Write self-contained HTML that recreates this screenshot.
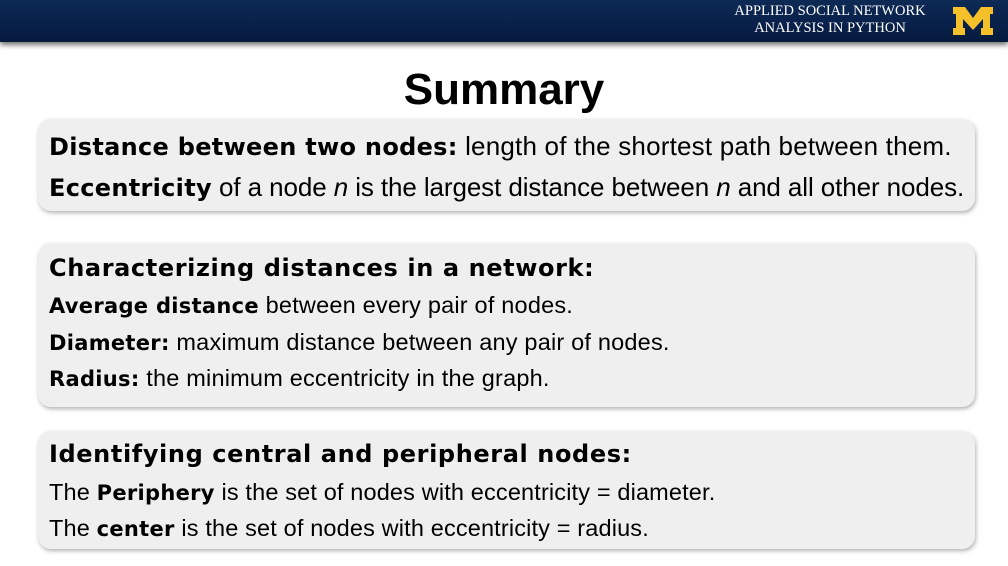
<!DOCTYPE html>
<html><head><meta charset="utf-8">
<style>
body{margin:0;width:1008px;height:566px;background:#fff;position:relative;overflow:hidden;font-family:"Liberation Sans",sans-serif;color:#000}
.hdr{position:absolute;left:0;top:0;width:1008px;height:42px;background:linear-gradient(#0d2a55,#08204a 60%,#061a3c);box-shadow:0 3px 5px rgba(0,0,0,.55)}
.ht{position:absolute;left:720px;top:3px;width:220px;text-align:center;color:#fff;font-family:"Liberation Serif",serif;font-size:14.5px;line-height:17px}
.m{position:absolute;left:952px;top:6px;width:42px;height:30px}
.title{position:absolute;left:0;width:1008px;top:62px;text-align:center;font-size:44px;font-weight:bold;line-height:56px}
.box{position:absolute;left:38px;width:937px;background:#efefef;border-radius:13px;box-shadow:1px 2px 4px rgba(0,0,0,.3)}
.l{position:absolute;left:49px;white-space:nowrap;line-height:30px}
.a{font-size:26px}
.h{font-size:24px;font-weight:bold;font-family:"DejaVu Sans",sans-serif;letter-spacing:0.6px}
.s{font-size:23.5px;letter-spacing:0.2px}
b{font-weight:bold;font-family:"DejaVu Sans",sans-serif;letter-spacing:0.3px}
.a b{font-size:24px}
.s b{font-size:21px}
</style></head><body>
<div class="hdr">
<div class="ht">APPLIED SOCIAL NETWORK<br>ANALYSIS IN PYTHON</div>
<svg class="m" viewBox="0 0 42 30"><path d="M1 1h12l8 11 8-11h12v7h-3v14h3v7H29v-7h2V13l-10 11-10-11v9h2v7H1v-7h3V8H1z" fill="#f6c02a"/></svg>
</div>
<div class="title">Summary</div>
<div class="box" style="top:119px;height:92px"></div>
<div class="box" style="top:243px;height:164px"></div>
<div class="box" style="top:431px;height:118px"></div>
<div class="l a" style="top:131px;letter-spacing:0.2px"><b>Distance between two nodes:</b> length of the shortest path between them.</div>
<div class="l a" style="top:172px;letter-spacing:-0.1px"><b>Eccentricity</b> of a node <i>n</i> is the largest distance between <i>n</i> and all other nodes.</div>
<div class="l h" style="top:253px">Characterizing distances in a network:</div>
<div class="l s" style="top:290px"><b>Average distance</b> between every pair of nodes.</div>
<div class="l s" style="top:327px"><b>Diameter:</b> maximum distance between any pair of nodes.</div>
<div class="l s" style="top:363px"><b>Radius:</b> the minimum eccentricity in the graph.</div>
<div class="l h" style="top:439px">Identifying central and peripheral nodes:</div>
<div class="l s" style="top:477px;letter-spacing:0.15px">The <b>Periphery</b> is the set of nodes with eccentricity = diameter.</div>
<div class="l s" style="top:513px;letter-spacing:0.15px">The <b>center</b> is the set of nodes with eccentricity = radius.</div>
</body></html>
